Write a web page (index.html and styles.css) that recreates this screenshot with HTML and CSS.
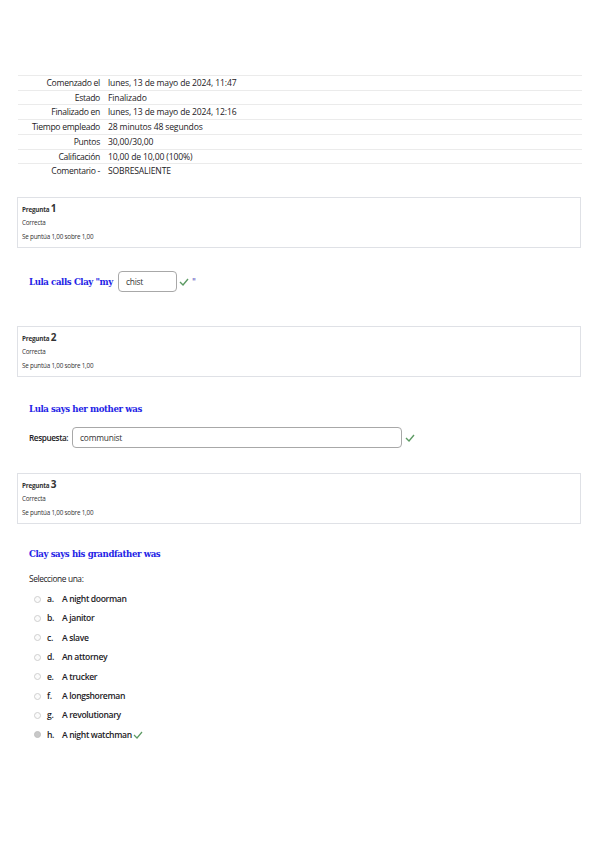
FILE: index.html
```html
<!DOCTYPE html>
<html lang="es">
<head>
<meta charset="utf-8">
<link rel="stylesheet" href="styles.css">
</head>
<body>
<div class="page">
  <table class="summary">
    <tr><th>Comenzado el</th><td>lunes, 13 de mayo de 2024, 11:47</td></tr>
    <tr><th>Estado</th><td>Finalizado</td></tr>
    <tr><th>Finalizado en</th><td>lunes, 13 de mayo de 2024, 12:16</td></tr>
    <tr><th>Tiempo empleado</th><td>28 minutos 48 segundos</td></tr>
    <tr><th>Puntos</th><td>30,00/30,00</td></tr>
    <tr><th>Calificación</th><td>10,00 de 10,00 (100%)</td></tr>
    <tr><th>Comentario -</th><td>SOBRESALIENTE</td></tr>
  </table>

  <div class="qinfo q1">
    <div class="qno">Pregunta <span class="num">1</span></div>
    <div class="state">Correcta</div>
    <div class="grade">Se puntúa 1,00 sobre 1,00</div>
  </div>
  <div class="qtext inline">
    <span>Lula calls Clay "my</span>
    <span class="field small">chist</span>
    <svg class="check" viewBox="0 0 10 8" width="10" height="8"><polyline points="1,4 4,7 9,1" fill="none" stroke="#5c9a63" stroke-width="1.4"/></svg>
    <span class="quote">"</span>
  </div>

  <div class="qinfo q2">
    <div class="qno">Pregunta <span class="num">2</span></div>
    <div class="state">Correcta</div>
    <div class="grade">Se puntúa 1,00 sobre 1,00</div>
  </div>
  <div class="qtext block">Lula says her mother was</div>
  <div class="answer">
    <span class="label">Respuesta:</span>
    <span class="field wide">communist</span>
    <svg class="check" viewBox="0 0 10 8" width="10" height="8"><polyline points="1,4 4,7 9,1" fill="none" stroke="#5c9a63" stroke-width="1.4"/></svg>
  </div>

  <div class="qinfo q3">
    <div class="qno">Pregunta <span class="num">3</span></div>
    <div class="state">Correcta</div>
    <div class="grade">Se puntúa 1,00 sobre 1,00</div>
  </div>
  <div class="qtext block q3text">Clay says his grandfather was</div>
  <div class="prompt">Seleccione una:</div>
  <ul class="options">
    <li><span class="radio"></span><span class="letter">a.</span><span class="opt">A night doorman</span></li>
    <li><span class="radio"></span><span class="letter">b.</span><span class="opt">A janitor</span></li>
    <li><span class="radio"></span><span class="letter">c.</span><span class="opt">A slave</span></li>
    <li><span class="radio"></span><span class="letter">d.</span><span class="opt">An attorney</span></li>
    <li><span class="radio"></span><span class="letter">e.</span><span class="opt">A trucker</span></li>
    <li><span class="radio"></span><span class="letter">f.</span><span class="opt">A longshoreman</span></li>
    <li><span class="radio"></span><span class="letter">g.</span><span class="opt">A revolutionary</span></li>
    <li><span class="radio checked"></span><span class="letter">h.</span><span class="opt">A night watchman</span><svg class="check" viewBox="0 0 10 8" width="10" height="8"><polyline points="1,4 4,7 9,1" fill="none" stroke="#5c9a63" stroke-width="1.2"/></svg></li>
  </ul>
</div>
</body>
</html>
```

FILE: styles.css
```css
* { box-sizing: border-box; }
html, body { margin: 0; padding: 0; background: #fff; }
body {
  font-family: "Open Sans", "Liberation Sans", sans-serif;
  color: #1d2125;
}
.page {
  padding: 75px 18px 0 17px;
}
.summary {
  width: 564px;
  margin-left: 1px;
  border-collapse: collapse;
  font-size: 8.6px;
  letter-spacing: -0.15px;
}
.summary tr { border-top: 1px solid #ebebeb; height: 14.7px; }
.summary th {
  width: 89px;
  text-align: right;
  font-weight: 400;
  padding: 2px 7px 0 0;
  white-space: nowrap;
  line-height: 11.7px;
  letter-spacing: -0.3px;
}
.summary td {
  padding: 2px 0 0 1px;
  line-height: 11.7px;
}
.qinfo {
  border: 1px solid #dfe1e6;
  height: 51px;
  padding: 3px 0 0 4px;
  color: #333;
  font-size: 6.3px;
  letter-spacing: -0.2px;
}
.q1 { margin-top: 19px; }
.q2 { margin-top: 34px; }
.q3 { margin-top: 25px; }
.qno { font-weight: 700; height: 15px; line-height: 14px; }
.qno .num { font-size: 10px; }
.state { height: 15px; line-height: 14px; }
.grade { line-height: 12px; }
.qtext {
  font-family: "DejaVu Serif", "Liberation Serif", serif;
  font-weight: 700;
  color: #2323e6;
  font-size: 8.6px;
  letter-spacing: -0.4px;
  padding-left: 12px;
}
.inline {
  display: flex;
  align-items: center;
  gap: 3px;
  margin-top: 23px;
  height: 21px;
}
.field {
  font-family: "Open Sans", "Liberation Sans", sans-serif;
  font-weight: 400;
  color: #333;
  border: 1px solid #a8a8a8;
  border-radius: 4px;
  display: flex;
  align-items: center;
  height: 21px;
  font-size: 8.4px;
  letter-spacing: -0.2px;
}
.field.small { width: 59px; padding-left: 7px; margin-left: 2px; }
.inline .check { margin-left: -1px; }
.inline .quote { margin-left: 0; font-weight: 400; color: #3a3ab0; }
.block { margin-top: 26px; line-height: 12px; }
.q3text { margin-top: 24px; }
.answer {
  display: flex;
  align-items: center;
  margin-top: 12px;
  padding-left: 12px;
  height: 21px;
  font-size: 8.2px;
  letter-spacing: -0.4px;
}
.answer .label { width: 43px; font-weight: 600; }
.field.wide { width: 330px; padding-left: 7px; }
.answer .check { margin-left: 3px; }
.prompt {
  margin-top: 13px;
  padding-left: 12px;
  font-size: 8.4px;
  letter-spacing: -0.4px;
  line-height: 11px;
}
.options {
  list-style: none;
  margin: 5px 0 0;
  padding: 0 0 0 17px;
  font-size: 8.6px;
  letter-spacing: -0.35px;
}
.options li {
  display: flex;
  align-items: center;
  height: 19.4px;
}
.radio {
  width: 7px;
  height: 7px;
  border-radius: 50%;
  border: 1px solid #cfcfcf;
  background: #fbfbfb;
  margin-right: 6px;
}
.radio.checked { background: #c8c8c8; border-color: #c0c0c0; }
.letter { font-weight: 600; width: 15px; }
.opt { font-weight: 600; }
.options .check { margin-left: 1px; }
```
